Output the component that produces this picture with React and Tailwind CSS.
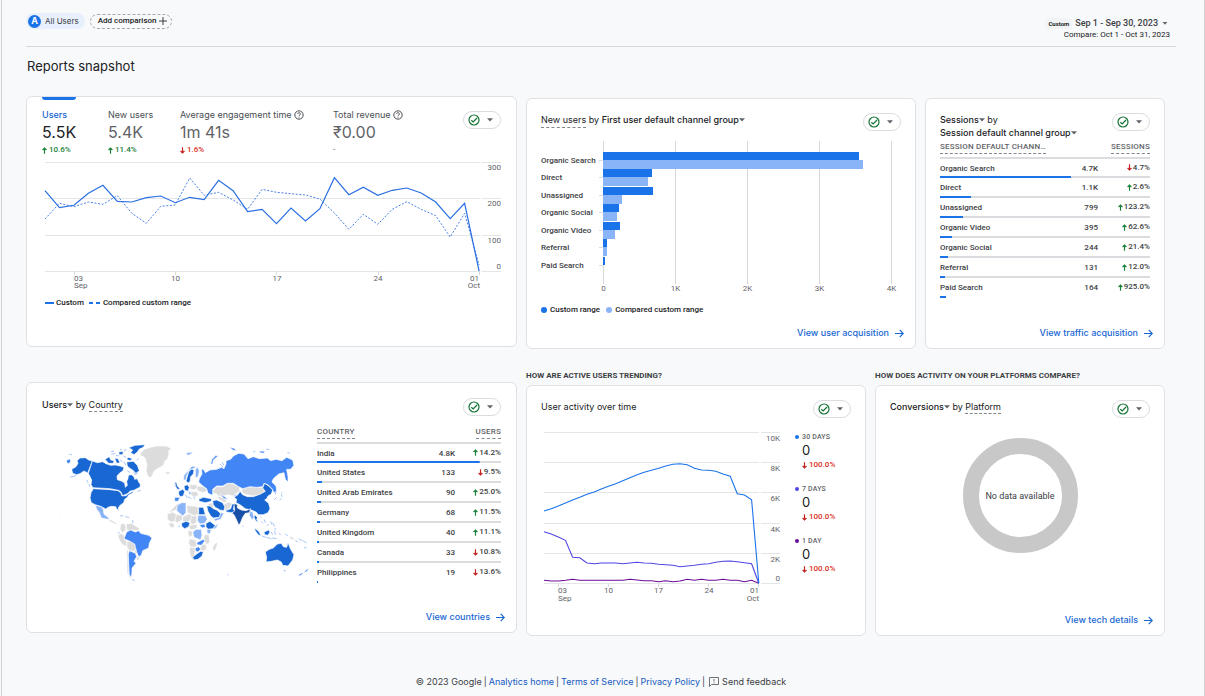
import React from "react";

const display = "font-['Inter',sans-serif]";

function CheckCircle() {
  return (
    <svg viewBox="0 0 24 24" className="size-[12px] text-[#137333]" fill="none" stroke="currentColor" strokeWidth="2.4" aria-hidden="true">
      <circle cx="12" cy="12" r="10" />
      <path d="M6.600 12.400l3.800 3.600L18 8" />
    </svg>
  );
}

function Caret({ className = "size-[7px]" }) {
  return (
    <svg viewBox="0 0 8 5" className={className + " inline-block shrink-0"} fill="#5f6368" aria-hidden="true">
      <path d="M0 0h8L4 4.6z" />
    </svg>
  );
}

function StatusPill() {
  return (
    <button type="button" aria-label="Data quality" className="flex h-[18px] w-[38px] shrink-0 items-center justify-between rounded-full border border-[#dadce0] bg-white pr-[7px] pl-[4px]">
      <CheckCircle />
      <Caret className="h-[4px] w-[6px]" />
    </button>
  );
}

function Help() {
  return (
    <svg viewBox="0 0 24 24" className="size-[10px] shrink-0" fill="none" stroke="#4a4d51" strokeWidth="2.4" aria-hidden="true">
      <circle cx="12" cy="12" r="10" />
      <path d="M8.8 9.6a3.2 3.2 0 1 1 5 2.6c-1.2.9-1.8 1.3-1.8 2.6M12 16.4v2" />
    </svg>
  );
}

function Arrow({ up, className = "" }) {
  return (
    <svg viewBox="0 0 6 8" className={"inline-block h-[7px] w-[5px] " + className} fill="none" stroke={up ? "#188038" : "#c5221f"} strokeWidth="1.4" aria-hidden="true">
      {up ? <path d="M3 8V1M.7 3.4L3 1l2.3 2.4" /> : <path d="M3 0v7M.7 4.6L3 7l2.3-2.4" />}
    </svg>
  );
}

function Card({ className = "", children }) {
  return (
    <section className={"flex min-h-[251px] flex-col rounded-md border border-[#dfe1e5] bg-white " + className}>{children}</section>
  );
}

function CardLink({ children }) {
  return (
    <a href="#" className={display + " mt-auto mr-[11px] mb-[8px] flex items-center gap-[6px] self-end text-[9px] leading-[14px] font-medium text-[#1967d2]"}>
      {children}
      <svg viewBox="0 0 16 16" className="size-[9px]" fill="none" stroke="currentColor" strokeWidth="2" aria-hidden="true">
        <path d="M0 8h14M8.4 1.6L14.6 8l-6.2 6.4" />
      </svg>
    </a>
  );
}

function Delta({ up, children }) {
  return (
    <span className={"flex h-[14px] items-center gap-[2px] text-[8px] font-medium " + (up ? "text-[#188038]" : "text-[#d93025]")}>
      <Arrow up={up} />
      {children}
    </span>
  );
}

const metrics = [
  { label: "Users", value: "5.5K", delta: "10.6%", up: true, active: true },
  { label: "New users", value: "5.4K", delta: "11.4%", up: true },
  { label: "Average engagement time", value: "1m 41s", delta: "1.6%", up: false, help: true },
  { label: "Total revenue", value: "₹0.00", delta: null, help: true },
];

const custom = [122, 173, 166, 130, 106, 154, 156, 143, 138, 158, 142, 149, 91, 122, 185, 178, 221, 174, 213, 176, 83, 134, 112, 136, 121, 114, 129, 156, 206, 160, 363];
const compared = [207, 160, 170, 156, 163, 137, 190, 220, 169, 165, 84, 136, 127, 150, 178, 118, 127, 131, 135, 147, 189, 238, 193, 223, 178, 155, 178, 197, 261, 190, 345];
const line = (ys, x0, step, y0) => ys.map((y, i) => `${(x0 + i * step).toFixed(1)},${(y0 + y / 3).toFixed(1)}`).join(" ");

function OverviewChart() {
  return (
    <svg viewBox="42 158 459 134" className="w-full" role="img" aria-label="Users over time">
      {[162.5, 198.5, 235.5, 271.5].map((y) => (
        <path key={y} d={`M45 ${y}H480M481.500 ${y}H501`} stroke="#e4e5e7" />
      ))}
      {[78.5, 175.5, 276.5, 378.5, 479.5].map((x) => (
        <path key={x} d={`M${x === 78.5 ? 74.5 : x} 271v4`} stroke="#dadce0" />
      ))}
      <g fontSize="8" fill="#5f6368">
        <g textAnchor="end">
          <text x="501" y="170">300</text>
          <text x="501" y="206">200</text>
          <text x="501" y="243">100</text>
          <text x="501" y="269">0</text>
          <text x="479" y="281">01</text>
          <text x="480" y="288">Oct</text>
        </g>
        <text x="74" y="281">03</text>
        <text x="74" y="288">Sep</text>
        <g textAnchor="middle">
          <text x="175.500" y="281">10</text>
          <text x="277" y="281">17</text>
          <text x="378" y="281">24</text>
        </g>
      </g>
      <polyline points={line(compared, 45, 14.47, 150)} fill="none" stroke="#4a80e8" strokeDasharray="2 1.6" />
      <polyline points={line(custom, 45, 14.47, 150)} fill="none" stroke="#2a6fe3" strokeWidth="1.2" />
    </svg>
  );
}

function Overview() {
  return (
    <Card className="px-[15px]">
      <div className="flex items-start justify-between">
        <div className="grid grid-cols-[66px_72px_153px_auto]">
          {metrics.map((m) => (
            <button type="button" key={m.label} className="flex flex-col items-start text-left">
              <span className={"mb-[8px] h-[3px] w-[34px] rounded-b-sm " + (m.active ? "bg-[#1a73e8]" : "")} />
              <span className={display + " flex h-[14px] items-center gap-[2px] text-[9px] whitespace-nowrap " + (m.active ? "font-medium text-[#1967d2]" : "text-[#4a4d51]")}>
                {m.label}
                {m.help && <Help />}
              </span>
              <span className={display + " mb-px h-[20px] text-[16px] leading-[20px] whitespace-nowrap " + (m.active ? "text-[#202124]" : "text-[#5f6368]")}>{m.value}</span>
              {m.delta ? <Delta up={m.up}>{m.delta}</Delta> : <span className="text-[8px] leading-[14px] text-[#5f6368]">-</span>}
            </button>
          ))}
        </div>
        <div className="pt-[14px]"><StatusPill /></div>
      </div>
      <div className="pt-px"><OverviewChart /></div>
      <div className="mt-[5px] flex items-center gap-[5px] pl-[3px] text-[8px] leading-[12px] font-medium text-[#202124]">
        <span className="flex items-center gap-[2px]"><i className="h-[2px] w-[9px] bg-[#1a73e8]" />Custom</span>
        <span className="flex items-center gap-[3px]"><i className="h-[2px] w-[4px] bg-[#1a73e8]" /><i className="h-[2px] w-[4px] bg-[#1a73e8]" />Compared custom range</span>
      </div>
    </Card>
  );
}

const channels = [
  ["Organic Search", 152, 859, 863],
  ["Direct", 169, 652, 648],
  ["Unassigned", 187, 653, 622],
  ["Organic Social", 204, 619, 617],
  ["Organic Video", 222, 620, 615],
  ["Referral", 239, 607, 607],
  ["Paid Search", 257, 605, 603],
];

function NewUsers() {
  return (
    <Card>
      <div className="flex items-start justify-between px-[14px] pt-[14px]">
        <h2 className={display + " text-[9px] leading-[14px] text-[#202124]"}>
          <span className="inline-block border-b border-dashed border-[#80868b]">New users</span> by <button type="button" className="font-medium">First user default channel group<Caret className="mb-[2px] h-[4px] w-[6px]" /></button>
        </h2>
        <StatusPill />
      </div>
      <div className="px-[14px] pt-[7px]">
        <svg viewBox="541 138 360 158" className="w-full" role="img" aria-label="New users by channel group">
          {[0, 1, 2, 3, 4].map((k) => (
            <g key={k}>
              <path d={`M${603.5 + 72 * k} 141V284`} stroke="#d5d7da" />
              <text x={603.5 + 72 * k} y="291" fontSize="8" fill="#5f6368" textAnchor="middle">{k ? k + "K" : "0"}</text>
            </g>
          ))}
          {channels.map(([name, y, a, b]) => (
            <g key={name}>
              <path d={`M599 ${y + 8.5}h4`} stroke="#dadce0" />
              <text x="541" y={y + 11} fontSize="8" fontWeight="500" fill="#3c4043">{name}</text>
              <path d={`M603 ${y}H${a}v8H603z`} fill="#1a73e8" />
              <path d={`M603 ${y + 8}H${b}v9H603z`} fill="#8ab4f8" />
            </g>
          ))}
        </svg>
      </div>
      <div className="mt-[8px] flex gap-[6px] pl-[14px] text-[8px] leading-[12px] font-medium text-[#202124]">
        <span className="flex items-center gap-[3px]"><i className="size-[6px] rounded-full bg-[#1a73e8]" />Custom range</span>
        <span className="flex items-center gap-[3px]"><i className="size-[6px] rounded-full bg-[#8ab4f8]" />Compared custom range</span>
      </div>
      <CardLink>View user acquisition</CardLink>
    </Card>
  );
}

function DataTable({ head, metric, rows, deltaWidth }) {
  const grey = "linear-gradient(#dadce0,#dadce0)";
  const blue = "linear-gradient(#1a73e8,#1a73e8)";
  return (
    <table className="w-full table-fixed border-collapse text-[8px] font-medium text-[#3c4043]">
      <colgroup>
        <col />
        <col className="w-[40px]" />
        <col className={deltaWidth} />
      </colgroup>
      <thead>
        <tr className="h-[18px] border-b-2 border-[#dadce0] align-top text-[#5f6368]">
          <th scope="col" colSpan={2} className="p-0 text-left font-medium">
            <span className="inline-block border-b border-dashed border-[#80868b] leading-[13px] tracking-wide">{head}</span>
          </th>
          <th scope="col" className="p-0 text-right font-medium">
            <span className="inline-block border-b border-dashed border-[#80868b] leading-[13px] tracking-wide">{metric}</span>
          </th>
        </tr>
      </thead>
      <tbody>
        {rows.map(([name, value, up, delta, pct], i) => (
          <tr
            key={name}
            className="h-[20px] bg-no-repeat"
            style={{
              backgroundImage: i === rows.length - 1 ? blue : `${blue}, ${grey}`,
              backgroundSize: `${pct}% 2px, 100% 2px`,
              backgroundPosition: "left bottom",
            }}
          >
            <td className="p-0 whitespace-nowrap">{name}</td>
            <td className="p-0 text-right">{value}</td>
            <td className="p-0 text-right text-[#3c4043]"><span className="inline-flex items-center gap-px"><Arrow up={up} />{delta}</span></td>
          </tr>
        ))}
      </tbody>
    </table>
  );
}

const sessions = [
  ["Organic Search", "4.7K", false, "4.7%", 62.4],
  ["Direct", "1.1K", true, "2.6%", 14.8],
  ["Unassigned", "799", true, "123.2%", 11],
  ["Organic Video", "395", true, "62.6%", 5.7],
  ["Organic Social", "244", true, "21.4%", 3.8],
  ["Referral", "131", true, "12.0%", 2.4],
  ["Paid Search", "164", true, "925.0%", 2.9],
];

const countries = [
  ["India", "4.8K", true, "14.2%", 88.4],
  ["United States", "133", false, "9.5%", 2.8],
  ["United Arab Emirates", "90", true, "25.0%", 2.2],
  ["Germany", "68", true, "11.5%", 1.7],
  ["United Kingdom", "40", true, "11.1%", 1.1],
  ["Canada", "33", false, "10.8%", 1.1],
  ["Philippines", "19", false, "13.6%", 0.6],
];

function Sessions() {
  return (
    <Card>
      <div className="flex items-start justify-between px-[14px] pt-[14px]">
        <h2 className={display + " text-[9px] leading-[13px] text-[#202124]"}>
          <button type="button" className="font-medium">Sessions<Caret className="mb-[2px] h-[4px] w-[6px]" /></button> by
          <br />
          <button type="button" className="font-medium whitespace-nowrap">Session default channel group<Caret className="mb-[2px] h-[4px] w-[6px]" /></button>
        </h2>
        <StatusPill />
      </div>
      <div className="px-[14px] pt-px">
        <DataTable head="SESSION DEFAULT CHANN…" metric="SESSIONS" rows={sessions} deltaWidth="w-[52px]" />
      </div>
      <CardLink>View traffic acquisition</CardLink>
    </Card>
  );
}

const land = {
  "#dcdcdc": [
    "362,220 372,208 392,202 410,198 440,198 455,207 446,212 447,222 442,238 434,244 430,257 412,266 402,274 396,288 390,293 383,288 378,272 381,256 377,238 371,230 362,227",
    "436,277 444,275 452,278 446,283 437,281",
    "302,432 312,430 318,440 316,452 308,458 300,450",
    "318,432 334,430 350,440 362,448 350,452 336,450 330,456 320,448",
    "294,466 304,460 314,468 312,478 322,486 318,500 306,492 298,480",
    "320,488 332,480 344,492 350,506 344,514 328,512 321,502",
    "344,508 356,514 352,522 344,518",
    "320,502 325,514 324,548 330,588 336,596 328,592 321,566",
    "350,530 360,532 354,542 348,538",
    "262,418 276,420 286,428 298,432 284,432 270,424",
    "444,398 460,384 470,372 480,370 474,386 458,394",
    "442,402 458,396 470,404 468,424 452,426 442,418",
    "470,402 488,408 486,420 472,428 464,424",
    "444,430 460,428 464,440 454,444",
    "488,410 506,402 516,404 514,420 502,426 488,424",
    "500,376 534,380 535,404 520,406 502,398",
    "514,408 530,406 530,428 516,434 510,426",
    "508,436 530,432 532,444 516,450 508,446",
    "504,452 516,452 518,466 508,472 504,462",
    "508,476 528,480 530,500 512,502 506,490",
    "508,502 526,502 524,530 516,540 510,522",
    "552,466 566,462 570,486 560,494 552,482",
    "548,492 560,496 558,510 546,514 540,504",
    "580,498 588,488 593,490 586,510 580,514 578,506",
    "508,314 530,314 534,324 520,330 510,326",
    "530,318 550,320 564,330 550,338 532,332",
    "512,336 530,334 536,344 524,352 512,344",
    "578,332 590,320 610,320 622,310 640,312 658,322 660,334 646,342 640,348 622,344 606,350 596,348 590,342 580,340",
    "664,330 680,322 700,320 726,322 734,334 720,344 700,348 680,344 668,340",
    "588,350 602,350 622,362 614,368 600,360",
    "612,372 626,366 636,370 630,384 616,392 610,382",
    "562,372 578,368 582,386 572,384",
    "806,468 818,472 826,480 812,478",
  ],
  "#1967d2": [
    "155,268 168,260 174,250 171,242 180,234 196,233 206,240 217,243 203,279 192,273 180,281 170,284 158,280",
    "217,243 232,248 248,245 258,251 272,256 286,255 300,258 312,262 309,272 298,280 291,288 292,299 304,303 314,309 316,322 322,316 320,304 324,296 325,286 334,284 342,290 344,298 352,296 356,306 361,313 360,322 350,326 342,331 331,333 322,341 308,347 303,336 296,331 270,326 219,323 213,314 215,300 205,280",
    "220,326 270,329 294,332 302,338 306,348 318,347 328,340 340,333 338,339 326,345 322,352 314,358 311,368 299,377 295,384 296,392 290,386 287,380 275,379 266,381 257,387 244,380 226,374 214,368 210,354 213,338",
    "326,203 345,196 375,194 370,202 358,207 352,216 342,224 332,218 338,210",
    "320,246 340,244 352,256 358,272 348,280 338,270 328,264 322,258",
    "255,238 268,230 272,240 282,242 280,250 266,250",
    "284,234 294,236 300,248 290,250",
    "296,216 310,214 308,224 298,224",
    "324,232 338,236 330,242 320,238",
    "498,304 506,276 514,266 522,270 520,282 512,290 510,306 504,308",
    "476,334 488,328 494,334 490,348 480,350 476,342",
    "492,318 502,314 508,322 504,334 494,330",
    "464,306 470,308 472,318 480,326 474,329 468,322",
    "536,358 550,352 574,356 574,364 556,368 538,364",
    "536,382 550,382 556,404 536,404",
    "560,378 570,378 580,386 590,390 604,402 598,412 580,414 572,408 564,394",
    "578,362 590,360 608,368 614,380 612,392 600,390 586,382 580,374",
    "616,392 632,386 636,372 644,372 640,388 646,394 634,398 620,396",
    "558,430 570,424 580,432 588,438 578,446 564,448 558,440",
    "484,430 498,424 510,428 506,440 494,446 486,440",
    "518,532 530,522 542,514 550,516 546,528 534,538 522,540",
    "642,352 654,344 660,334 668,344 682,350 700,350 722,342 736,334 728,324 734,310 746,318 758,330 754,342 744,348 740,356 734,360 746,370 750,386 744,398 730,404 716,404 708,396 694,390 676,386 660,374 648,368 650,358",
    "736,516 748,508 760,504 772,492 784,490 790,500 800,502 804,488 812,508 822,524 818,540 804,558 788,556 784,546 772,540 754,544 738,546 740,532",
    "732,456 746,450 750,456 744,466 734,464",
    "704,444 716,454 724,468 714,464 706,452",
    "704,404 712,412 710,420 716,426 708,424 702,412",
    "788,346 784,358 776,364 784,354",
  ],
  "#4285f4": [
    "538,296 546,282 544,266 552,270 556,278 570,270 590,268 604,262 612,266 618,252 618,242 632,238 640,228 656,220 672,222 684,236 700,230 718,236 742,234 752,242 768,238 786,242 800,232 818,240 822,256 812,268 800,268 804,290 804,306 796,298 792,278 776,282 760,296 756,306 768,318 770,334 762,338 756,326 744,314 732,310 728,320 710,322 690,320 668,326 656,320 640,310 622,310 608,318 590,318 578,328 578,346 564,340 560,326 546,316 536,306",
    "572,252 576,238 588,226 594,228 580,240 578,252",
    "628,202 640,204 652,212 640,211",
    "718,213 736,214 730,220 720,218",
    "464,352 480,352 474,364 464,364",
    "320,456 332,450 346,456 356,452 362,460 386,466 396,474 388,490 386,504 368,512 364,526 356,530 350,516 344,492 330,484 312,476",
    "328,512 346,520 350,530 342,544 348,550 336,564 336,576 334,592 328,584 326,552 325,524",
    "526,504 536,500 542,508 534,516 526,512",
    "530,488 550,478 554,484 544,496 532,494",
    "538,434 554,432 556,442 546,444",
    "834,586 846,578 850,580 840,588",
    "850,578 858,570 866,564 862,574",
    "138,242 150,236 152,246 144,252",
    "600,342 614,350 624,358 612,356",
    "766,346 764,338 770,334",
    "790,570 797,570 795,576",
  ],
  "#8ab4f8": [
    "226,376 244,380 250,388 252,402 264,412 270,414 262,418 244,414 238,398 230,388",
    "490,300 492,286 504,272 516,258 530,260 520,266 508,270 500,288 498,300",
    "526,290 526,270 532,260 538,272 536,286 530,294",
    "472,376 484,368 498,368 498,398 488,408 470,392",
    "534,406 556,406 562,418 554,430 540,432 532,422",
    "518,456 528,448 544,448 546,466 542,480 522,472",
    "560,448 574,448 570,462 562,460",
    "582,440 596,430 590,442 580,450",
    "602,398 612,400 602,418 584,424 582,416 598,412",
    "690,392 698,396 702,412 696,420 688,406",
    "292,456 300,456 298,464",
    "498,218 520,216 510,224 502,226",
    "506,332 514,338 510,344 506,340",
    "474,440 478,432 480,444",
  ],
  "#174ea6": [
    "642,370 652,374 652,384 664,390 678,392 692,386 688,398 676,400 668,412 660,432 656,434 648,416 642,404 636,400 644,392",
  ],
};

const specks = "M115 400l6 3M66 498h2M148 222l8 3M150 292l10-3M160 290l8-4M272 216l10-3M274 224l12-4M288 226l10 2M312 212l8-3M310 228l8 4M300 240l8 6M312 246l6 10M350 240l6-4M300 208l6 2M322 272l8 6M340 276l10 6M343 284l10-4M200 300l4 8M206 312l4 8M352 334l10-3M300 408l10-1M316 410l12 2M338 420l1 10M496 344l6 10M504 350l10 6M520 350l4 8M464 314l2 6M640 348l14-4M668 436l2 4M720 410l4 2M724 424l4 6M732 418l4 10M752 424l4 10M758 428l6 12M764 444l4 6M740 438l6-6M726 468l12 4M740 472l14 4M756 474l14 2M754 456l4 8M764 452l2 12M776 460l6 4M770 352l-8 8M784 342l2 10M784 336l4 4M796 462l8 6M826 482l8 4M836 476l10 6M848 482l12 6M852 502l8 2M622 584l4 1M336 598l8 4M322 560l2 20M738 208h10M802 218l8 2M700 216l6-2M600 252l10 10M606 246l6 10M606 262l4 8";

function WorldMap() {
  return (
    <svg viewBox="120 189 750 430" className="w-[250px] max-w-full" role="img" aria-label="Users by country map">
      <path d={specks} stroke="#a9c6f8" strokeWidth="3" fill="none" />
      {Object.entries(land).map(([fill, shapes]) => (
        <g key={fill} fill={fill} stroke="#fff" strokeWidth="2" strokeLinejoin="round">
          {shapes.map((p) => <polygon key={p} points={p} />)}
        </g>
      ))}
    </svg>
  );
}

function UsersByCountry() {
  return (
    <Card className="mt-[13px]">
      <div className="flex items-start justify-between px-[15px] pt-[15px]">
        <h2 className={display + " text-[9px] leading-[14px] text-[#202124]"}>
          <button type="button" className="font-medium">Users<Caret className="mb-[2px] h-[4px] w-[6px]" /></button> by <span className="inline-block border-b border-dashed border-[#80868b] leading-[12px]">Country</span>
        </h2>
        <StatusPill />
      </div>
      <div className="flex justify-between pr-[15px] pl-[33px] pt-[9px]">
        <div className="pt-[18px]"><WorldMap /></div>
        <div className="w-[184px] shrink-0"><DataTable head="COUNTRY" metric="USERS" rows={countries} deltaWidth="w-[46px]" /></div>
      </div>
      <CardLink>View countries</CardLink>
    </Card>
  );
}

const days30 = [438, 431, 423, 414, 405, 397, 388, 381, 372, 364, 356, 347, 338, 329, 322, 316, 310, 303, 298, 296, 299, 310, 315, 316, 319, 327, 334, 386, 390, 404, 655];
const days7 = [500, 507, 516, 526, 577, 578, 594, 596, 594, 594, 594, 596, 594, 592, 594, 595, 598, 599, 601, 605, 603, 601, 598, 596, 592, 589, 588, 590, 593, 596, 655];
const day1 = [646, 648, 648, 646, 643, 646, 646, 646, 646, 646, 646, 646, 643, 645, 647, 647, 650, 647, 650, 648, 643, 646, 643, 646, 646, 643, 646, 646, 650, 646, 655];

function UserActivity() {
  return (
    <Card>
      <div className="flex items-start justify-between px-[14px] pt-[14px]">
        <h2 className={display + " text-[9px] leading-[14px] text-[#202124]"}>User activity over time</h2>
        <StatusPill />
      </div>
      <div className="flex pr-[14px] pl-[15px] pt-[10px]">
        <svg viewBox="542 428 240 176" className="min-w-0 flex-1" role="img" aria-label="Active users over time">
          {[432.5, 462.5, 492.5, 523.5, 553.5, 583.5].map((y, i) => (
            <g key={y}>
              <path d={`M544 ${y}H759M761 ${y}H780`} stroke="#e4e5e7" />
              <text x="780" y={i === 5 ? 581 : y + 8} fontSize="8" fill="#5f6368" textAnchor="end">{["10K", "8K", "6K", "4K", "2K", "0"][i]}</text>
            </g>
          ))}
          {[558.5, 608.5, 658.5, 708.5, 758.5].map((x) => (
            <path key={x} d={`M${x} 583v4`} stroke="#dadce0" />
          ))}
          <g fontSize="8" fill="#5f6368">
            <text x="558" y="593">03</text>
            <text x="558" y="601">Sep</text>
            <g textAnchor="middle">
              <text x="608.500" y="593">10</text>
              <text x="658.500" y="593">17</text>
              <text x="709" y="593">24</text>
            </g>
            <g textAnchor="end">
              <text x="759" y="593">01</text>
              <text x="759" y="601">Oct</text>
            </g>
          </g>
          <g fill="none" strokeWidth="1.1">
            <polyline points={line(day1, 544, 7.16, 365)} stroke="#6a0d97" />
            <polyline points={line(days7, 544, 7.16, 365)} stroke="#4f46e5" />
            <polyline points={line(days30, 544, 7.16, 365)} stroke="#1a73e8" />
          </g>
        </svg>
        <dl className="ml-[13px] flex w-[56px] shrink-0 flex-col gap-[11px] pt-[3px]">
          {[["30 DAYS", "bg-[#1a73e8]"], ["7 DAYS", "bg-[#4f46e5]"], ["1 DAY", "bg-[#6a0d97]"]].map(([label, dot]) => (
            <div key={label}>
              <dt className="flex h-[12px] items-center gap-[3px] text-[7px] font-medium tracking-wide text-[#5f6368]">
                <i className={"size-[4px] rounded-full " + dot} />
                {label}
              </dt>
              <dd className="pl-[7px]">
                <span className={display + " block text-[13px] leading-[15px] text-[#202124]"}>0</span>
                <Delta up={false}>100.0%</Delta>
              </dd>
            </div>
          ))}
        </dl>
      </div>
    </Card>
  );
}

function Conversions() {
  return (
    <Card>
      <div className="flex items-start justify-between px-[14px] pt-[14px]">
        <h2 className={display + " text-[9px] leading-[14px] text-[#202124]"}>
          <button type="button" className="font-medium">Conversions<Caret className="mb-[2px] h-[4px] w-[6px]" /></button> by <span className="inline-block border-b border-dashed border-[#80868b] leading-[12px]">Platform</span>
        </h2>
        <StatusPill />
      </div>
      <div className="mt-[20px] flex size-[115px] items-center justify-center self-center rounded-full border-[16px] border-[#c8c8c8]">
        <span className="bg-white pt-[3px] text-[9px] whitespace-nowrap text-[#3c4043]">No data available</span>
      </div>
      <CardLink>View tech details</CardLink>
    </Card>
  );
}

function SectionTitle({ children }) {
  return <h3 className="h-[16px] text-[8px] leading-[13px] font-bold whitespace-nowrap text-[#3c4043]">{children}</h3>;
}

export default function App() {
  return (
    <div className="flex min-h-screen flex-col bg-[#f8f9fb] pl-px font-['Roboto',sans-serif] text-[#202124]">
      <div className="flex-1 border-x border-[#d0d2d6] pr-[28px] pl-[24px]">
        <header className="flex items-start justify-between border-b border-[#d5d8dc] pt-[13px] pb-[5px]">
          <div className="flex items-center gap-[5px]">
            <button type="button" className={display + " flex h-[16px] items-center gap-[4px] rounded-full bg-[#e8f0fe] pr-[6px] pl-[2px] text-[8px] text-[#3c4043]"}>
              <span className="flex size-[13px] items-center justify-center rounded-full bg-[#1a73e8] text-[9px] font-bold text-white">A</span>
              All Users
            </button>
            <button type="button" className="flex h-[15px] items-center gap-[2px] rounded-full border border-dashed border-[#a5a9ae] pr-[4px] pl-[7px] text-[8px] font-medium">
              Add comparison
              <svg viewBox="0 0 8 8" className="size-[8px]" stroke="#3c4043" aria-hidden="true"><path d="M4 0v8M0 4h8" /></svg>
            </button>
          </div>
          <button type="button" className="mr-[6px] flex flex-col items-end pt-[4px]">
            <span className="flex items-center gap-[3px] pr-[2px]">
              <span className="rounded-sm bg-[#f1f3f4] px-[3px] text-[6px] leading-[11px] font-bold">Custom</span>
              <span className="text-[9px] leading-[12px] font-medium text-[#3c4043]">Sep 1 - Sep 30, 2023</span>
              <Caret className="ml-px h-[3px] w-[6px]" />
            </span>
            <span className="text-[8px] leading-[12px]">Compare: Oct 1 - Oct 31, 2023</span>
          </button>
        </header>

        <main className="pr-[11px]">
          <h1 className={display + " mt-[9px] pl-px text-[13px] leading-[20px]"}>Reports snapshot</h1>
          <div className="mt-[20px] grid grid-cols-[491fr_639fr] items-start gap-x-[9px]">
            <Overview />
            <div className="grid grid-cols-[390fr_240fr] gap-[9px] pt-[2px]">
              <NewUsers />
              <Sessions />
            </div>
          </div>
          <div className="mt-[20px] grid grid-cols-[491fr_639fr] items-start gap-x-[9px]">
            <UsersByCountry />
            <div className="grid grid-cols-[340fr_290fr] gap-[9px]">
              <div><SectionTitle>HOW ARE ACTIVE USERS TRENDING?</SectionTitle><UserActivity /></div>
              <div><SectionTitle>HOW DOES ACTIVITY ON YOUR PLATFORMS COMPARE?</SectionTitle><Conversions /></div>
            </div>
          </div>
        </main>

        <footer className={display + " mt-[39px] flex items-center justify-center gap-[2px] text-[9px] leading-[14px] text-[#3c4043]"}>
          <span>© 2023 Google</span>|
          <a href="#" className="text-[#1558c0]">Analytics home</a>|
          <a href="#" className="text-[#1558c0]">Terms of Service</a>|
          <a href="#" className="text-[#1558c0]">Privacy Policy</a>|
          <button type="button" className="ml-[2px] flex items-center gap-[3px]">
            <svg viewBox="0 0 20 20" className="size-[10px]" fill="none" stroke="#5f6368" strokeWidth="1.8" aria-hidden="true">
              <path d="M1 19V1h18v14H5z" />
              <path d="M10 4v5M10 10.800v2" />
            </svg>
            Send feedback
          </button>
        </footer>
      </div>
    </div>
  );
}
